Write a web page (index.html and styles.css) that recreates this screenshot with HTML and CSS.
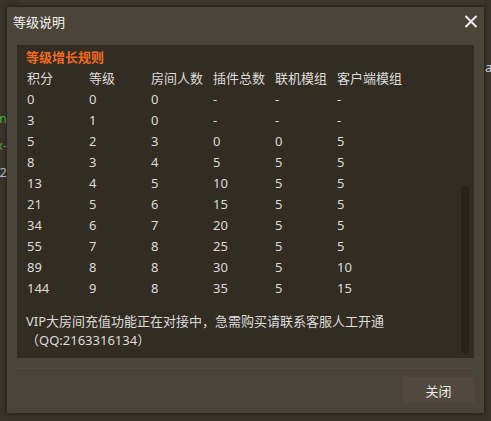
FILE: index.html
```html
<!DOCTYPE html>
<html lang="zh-CN">
<head>
<meta charset="utf-8">
<title>等级说明</title>
<link rel="stylesheet" href="styles.css">
</head>
<body>
<div class="page">
  <div class="side-left">
    <div class="sl-line sl-green">com</div>
    <div class="sl-line sl-green">x-</div>
    <div class="sl-line sl-grey">12</div>
  </div>
  <div class="center"><div class="topband"></div></div>
  <div class="side-right">
    <div class="sr-line">a</div>
  </div>
</div>

<div class="dialog">
  <div class="dlg-head">
    <span class="dlg-title">等级说明</span>
    <svg class="dlg-close" width="14" height="13" viewBox="0 0 14 13">
      <path d="M1.5 1 L12.5 12 M12.5 1 L1.5 12" stroke="#ececec" stroke-width="2" fill="none"/>
    </svg>
  </div>
  <div class="dlg-body">
    <div class="rule-title">等级增长规则</div>
    <table class="rules">
      <tr><td>积分</td><td>等级</td><td>房间人数</td><td>插件总数</td><td>联机模组</td><td>客户端模组</td></tr>
      <tr><td>0</td><td>0</td><td>0</td><td>-</td><td>-</td><td>-</td></tr>
      <tr><td>3</td><td>1</td><td>0</td><td>-</td><td>-</td><td>-</td></tr>
      <tr><td>5</td><td>2</td><td>3</td><td>0</td><td>0</td><td>5</td></tr>
      <tr><td>8</td><td>3</td><td>4</td><td>5</td><td>5</td><td>5</td></tr>
      <tr><td>13</td><td>4</td><td>5</td><td>10</td><td>5</td><td>5</td></tr>
      <tr><td>21</td><td>5</td><td>6</td><td>15</td><td>5</td><td>5</td></tr>
      <tr><td>34</td><td>6</td><td>7</td><td>20</td><td>5</td><td>5</td></tr>
      <tr><td>55</td><td>7</td><td>8</td><td>25</td><td>5</td><td>5</td></tr>
      <tr><td>89</td><td>8</td><td>8</td><td>30</td><td>5</td><td>10</td></tr>
      <tr><td>144</td><td>9</td><td>8</td><td>35</td><td>5</td><td>15</td></tr>
    </table>
    <p class="note">VIP大房间充值功能正在对接中，急需购买请联系客服人工开通<br>（QQ:2163316134）</p>
    <div class="thumb"></div>
  </div>
  <div class="dlg-foot">
    <button class="btn">关闭</button>
  </div>
</div>
</body>
</html>
```

FILE: styles.css
```css
html, body {
  margin: 0;
  padding: 0;
}
body {
  width: 491px;
  height: 421px;
  overflow: hidden;
  background: #39332a;
  font-family: "Noto Sans", "Noto Sans CJK SC", sans-serif;
  font-size: 13px;
  color: #dcdcdc;
  position: relative;
}
.page {
  display: flex;
  height: 421px;
}
.side-left {
  width: 7px;
  overflow: hidden;
  display: flex;
  flex-direction: column;
  align-items: flex-end;
  padding-top: 105px;
  box-sizing: border-box;
  border-top: 0;
}
.sl-line {
  height: 27px;
  line-height: 27px;
  white-space: nowrap;
  display: flex;
  justify-content: flex-end;
  width: 7px;
}
.sl-green { color: #4fae3c; }
.sl-grey { color: #b9c3cc; }
.center {
  flex: 1;
}
.topband {
  height: 5px;
  margin-left: 12px;
  background: #3e382e;
}
.side-right {
  width: 7px;
  overflow: hidden;
  padding-top: 58px;
  box-sizing: border-box;
}
.sr-line {
  line-height: 18px;
  padding-left: 1px;
  color: #d8dde4;
}

.dialog {
  position: absolute;
  left: 7px;
  top: 7px;
  width: 477px;
  height: 406px;
  background: #4b4438;
  box-shadow: 0 0 5px rgba(0, 0, 0, 0.55);
  display: flex;
  flex-direction: column;
}
.dlg-head {
  height: 30px;
  display: flex;
  align-items: center;
  justify-content: space-between;
  padding: 0 6px 0 6px;
}
.dlg-title {
  color: #f2f2f2;
  font-size: 13px;
  line-height: 30px;
}
.dlg-close {
  display: block;
  margin-top: -1px;
}
.dlg-body {
  position: relative;
  margin: 8px 10px 0 10px;
  height: 313px;
  box-sizing: border-box;
  background: #332c22;
  padding: 2px 9px 0 9px;
}
.rule-title {
  color: #f26a22;
  font-weight: 700;
  line-height: 21px;
}
.rules {
  border-collapse: collapse;
  table-layout: fixed;
  margin-left: 1px;
  width: 372px;
}
.rules td {
  width: 62px;
  height: 21px;
  padding: 0;
  line-height: 21px;
  white-space: nowrap;
  vertical-align: middle;
}
.note {
  margin: 13px 0 0 0;
  line-height: 19px;
}
.thumb {
  position: absolute;
  left: 444px;
  top: 141px;
  width: 8px;
  height: 167px;
  border-radius: 4px;
  background: #27221b;
}
.dlg-foot {
  margin: 10px 10px 0 10px;
  border-top: 1px solid #544c40;
  padding-top: 8px;
  display: flex;
  justify-content: flex-end;
}
.btn {
  width: 71px;
  height: 26px;
  border: 0;
  padding: 0;
  background: #51493d;
  color: #ececec;
  font-family: "Noto Sans", "Noto Sans CJK SC", sans-serif;
  font-size: 13px;
}
```
